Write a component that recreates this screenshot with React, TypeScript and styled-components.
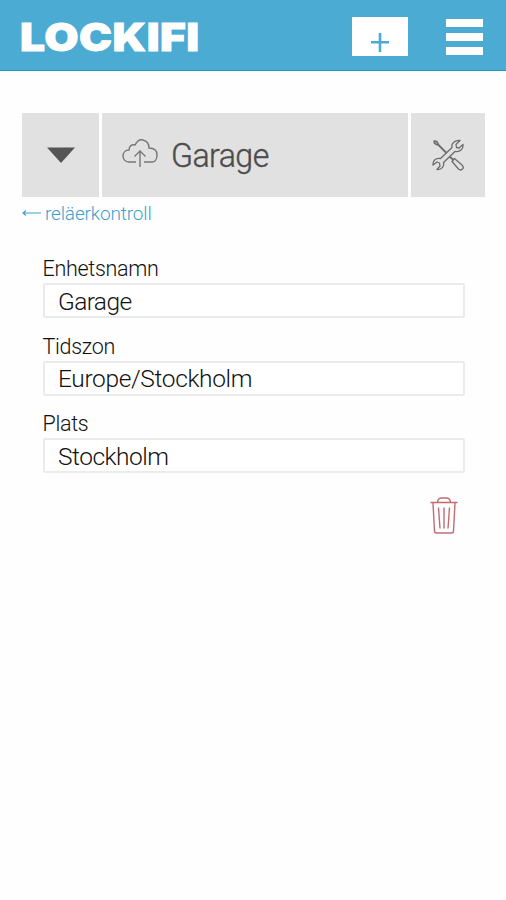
import React from "react";
import styled, { createGlobalStyle } from "styled-components";

const GlobalStyle = createGlobalStyle`
  * { box-sizing: border-box; }
  body { margin: 0; background: #fefefe; font-family: Roboto, "Liberation Sans", sans-serif; }
  button { font: inherit; border: 0; padding: 0; cursor: pointer; }
  svg { display: block; }
`;

const Page = styled.div`
  width: 100%;
  min-height: 900px;
  background: #fefefe;
`;

const Header = styled.header`
  display: flex;
  align-items: flex-start;
  justify-content: space-between;
  height: 71px;
  padding: 0 23px 0 20px;
  background: #4babd3;
  border-bottom: 1px solid #1b98bd;
`;

const Logo = styled.div`
  padding-top: 14px;
  font: 900 38px/46px Inter, sans-serif;
  letter-spacing: 0.4px;
  color: #fff;
  white-space: nowrap;
  -webkit-text-stroke: 0.8px #fff;
  transform: scaleX(1.165);
  transform-origin: left;
`;

const Actions = styled.div`
  display: flex;
  align-items: flex-start;
`;

const AddButton = styled.button`
  display: flex;
  justify-content: center;
  width: 56px;
  height: 39px;
  margin: 17px 38px 0 0;
  padding-top: 16px;
  background: #fff;
`;

const MenuButton = styled.button`
  display: flex;
  flex-direction: column;
  gap: 6px;
  width: 37px;
  margin-top: 19px;
  background: none;
`;

const MenuBar = styled.span`
  height: 8px;
  background: #fff;
`;

const DeviceBar = styled.section`
  display: grid;
  grid-template-columns: 77px 306px 74px;
  gap: 3px;
  height: 84px;
  margin: 42px 0 0 22px;
`;

const Tile = styled.button`
  display: flex;
  align-items: center;
  justify-content: center;
  background: #e1e1e1;
`;

const DeviceTile = styled(Tile)`
  justify-content: flex-start;
  gap: 13px;
  padding-left: 20px;
`;

const DeviceName = styled.span`
  font-size: 34px;
  line-height: 40px;
  font-weight: 300;
  letter-spacing: -0.6px;
  color: #4c4c4c;
  -webkit-text-stroke: 0.4px #4c4c4c;
  transform: scaleX(0.945);
  transform-origin: left;
`;

const BackLink = styled.a`
  display: flex;
  align-items: center;
  gap: 4px;
  margin: 4px 0 0 22px;
  height: 24px;
  font-size: 19px;
  font-weight: 300;
  letter-spacing: -0.15px;
  color: #3f9fcc;
`;

const Form = styled.form`
  display: flex;
  flex-direction: column;
  width: 422px;
  margin: 31px 0 0 42.5px;
`;

const Field = styled.label`
  display: flex;
  flex-direction: column;
  height: 77.5px;
`;

const Label = styled.span`
  height: 27px;
  font-size: 21.5px;
  line-height: 26px;
  font-weight: 300;
  letter-spacing: -0.3px;
  color: #111;
`;

const Input = styled.input<{ $tracking: number }>`
  width: 422px;
  height: 35px;
  padding: 1px 13.5px 0;
  border: 2px solid #ebebeb;
  border-radius: 2px;
  background: #fff;
  font: 300 24.500px/30px Roboto, sans-serif;
  letter-spacing: ${(p) => p.$tracking}px;
  color: #111;
`;

const DeleteButton = styled.button`
  align-self: flex-end;
  margin: 8.5px 7px 0 0;
  background: none;
`;

const PlusIcon = () => (
  <svg width="18" height="19" viewBox="0 0 18 19" stroke="#4babd3" strokeWidth="2.6">
    <path d="M9 0v19M0 9.2h18" />
  </svg>
);

const CaretIcon = () => (
  <svg width="28" height="16" viewBox="0 0 28 16">
    <path d="M0 0.5h28L14 16z" fill="#555" />
  </svg>
);

const CloudIcon = () => (
  <svg width="36" height="34" viewBox="0 0 36 34" fill="none" stroke="#777" strokeWidth="1.4">
    <path d="M14 24H7C3 24 1 21 1 18s2-6 6-6C7 8 10 6 13 7c2-4 5-6 8-5 4 1 6 3 6 8 5 0 8 2.500 8 7 0 4-2 7-5 7h-8" />
    <path d="M18 29V13M12.500 18.500 18 13l5.500 5.500" />
  </svg>
);

const ToolsIcon = () => (
  <svg width="32" height="32" viewBox="0 0 32 32" fill="none" stroke="#6c6c6c" strokeWidth="1.300" strokeLinejoin="round">
    <path d="M28 1.500 24 5.500l.5 3L27 9l4-3.500c.5 4.500-3 8-8 7L11.500 23.500c1 4-2 7.500-6.500 7l3-3.500-.5-3L5 23l-4 3c-.5-4.500 3-7.500 7.500-6.500L20 8.500c-1-4 3-7.500 8-7z" />
    <path d="m2 2 3 .5 1.500 2.500L5 6 2.500 4.500z" fill="#999" />
    <path d="m6 5.500 8.500 8.500M17.500 17.500l4 3.500" strokeWidth="1.800" />
    <path d="m20 22.500 2.500-3 7.500 6.500c3 3-.5 6.500-3.500 4z" />
  </svg>
);

const ArrowIcon = () => (
  <svg width="19" height="10" viewBox="0 0 19 10" fill="none" stroke="#3f9fcc" strokeWidth="1.100">
    <path d="M19 5H1M4 2.500 1 5l3 2.500" />
  </svg>
);

const TrashIcon = () => (
  <svg width="28" height="37" viewBox="0 0 28 37" fill="none" stroke="#c36b73" strokeWidth="1.400">
    <path d="M0.500 5.500h27M7.500 5c.5-3 2-4 4-4h5c2 0 3.500 1 4 4M3 6l1.500 28c0 1.500.5 2 2 2h15c1.500 0 2-.5 2-2L25 6" />
    <path d="m8.500 10.500 1.500 21M14 10.500v21M19.500 10.500 18 31.500" />
  </svg>
);

const fields = [
  { label: "Enhetsnamn", value: "Garage", tracking: -0.6 },
  { label: "Tidszon", value: "Europe/Stockholm", tracking: -0.37 },
  { label: "Plats", value: "Stockholm", tracking: -0.5 },
];

export default function App() {
  return (
    <Page>
      <GlobalStyle />
      <Header>
        <Logo>LOCKIFI</Logo>
        <Actions>
          <AddButton aria-label="Lägg till"><PlusIcon /></AddButton>
          <MenuButton aria-label="Meny"><MenuBar /><MenuBar /><MenuBar /></MenuButton>
        </Actions>
      </Header>
      <DeviceBar>
        <Tile><CaretIcon /></Tile>
        <DeviceTile><CloudIcon /><DeviceName>Garage</DeviceName></DeviceTile>
        <Tile><ToolsIcon /></Tile>
      </DeviceBar>
      <BackLink><ArrowIcon />reläerkontroll</BackLink>
      <Form>
        {fields.map((f) => (
          <Field key={f.label}>
            <Label>{f.label}</Label>
            <Input $tracking={f.tracking} defaultValue={f.value} />
          </Field>
        ))}
        <DeleteButton type="button" aria-label="Ta bort"><TrashIcon /></DeleteButton>
      </Form>
    </Page>
  );
}
